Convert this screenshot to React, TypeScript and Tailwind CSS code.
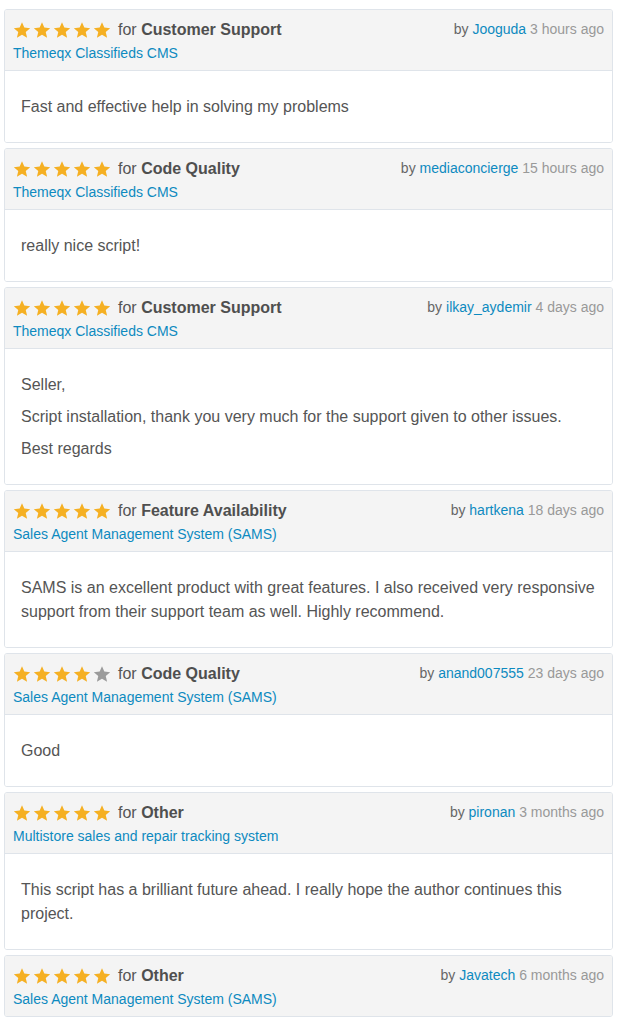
const reviews = [
  {
    stars: 5,
    category: 'Customer Support',
    product: 'Themeqx Classifieds CMS',
    author: 'Jooguda',
    time: '3 hours ago',
    body: ['Fast and effective help in solving my problems'],
  },
  {
    stars: 5,
    category: 'Code Quality',
    product: 'Themeqx Classifieds CMS',
    author: 'mediaconcierge',
    time: '15 hours ago',
    body: ['really nice script!'],
  },
  {
    stars: 5,
    category: 'Customer Support',
    product: 'Themeqx Classifieds CMS',
    author: 'ilkay_aydemir',
    time: '4 days ago',
    body: [
      'Seller,',
      'Script installation, thank you very much for the support given to other issues.',
      'Best regards',
    ],
  },
  {
    stars: 5,
    category: 'Feature Availability',
    product: 'Sales Agent Management System (SAMS)',
    author: 'hartkena',
    time: '18 days ago',
    body: [
      'SAMS is an excellent product with great features. I also received very responsive support from their support team as well. Highly recommend.',
    ],
  },
  {
    stars: 4,
    category: 'Code Quality',
    product: 'Sales Agent Management System (SAMS)',
    author: 'anand007555',
    time: '23 days ago',
    body: ['Good'],
  },
  {
    stars: 5,
    category: 'Other',
    product: 'Multistore sales and repair tracking system',
    author: 'pironan',
    time: '3 months ago',
    body: ['This script has a brilliant future ahead. I really hope the author continues this project.'],
  },
  {
    stars: 5,
    category: 'Other',
    product: 'Sales Agent Management System (SAMS)',
    author: 'Javatech',
    time: '6 months ago',
    body: [],
  },
];

const Star = ({ filled }: { filled: boolean }) => (
  <svg viewBox="0 0 24 24" className="w-[18px] h-[18px]">
    <path
      d="M12 1.6l3.1 7.2 7.8.7-5.9 5.2 1.8 7.7L12 18.3l-6.8 4.1 1.8-7.7L1.1 9.5l7.8-.7z"
      fill={filled ? '#f5b023' : '#9b9b9b'}
    />
  </svg>
);

const App = () => {
  return (
    <div className="min-h-screen bg-white px-[4px] pt-[9px] font-['Liberation_Sans',Arial,sans-serif]">
      <div className="flex flex-col gap-[5px] w-[609px]">
        {reviews.map((r, i) => (
          <div key={i} className="border border-[#dfe4ea] rounded-[3px] overflow-hidden">
            {/* Header */}
            <div className="bg-[#f4f4f4] px-[8px] pt-[9px] pb-[7px] flex justify-between">
              <div>
                <div className="flex items-center h-[22px]">
                  <div className="flex gap-[2px]">
                    {[0, 1, 2, 3, 4].map((s) => (
                      <Star key={s} filled={s < r.stars} />
                    ))}
                  </div>
                  <span className="ml-[7px] text-[16px] text-[#555]">
                    for <span className="font-bold text-[#4f4f4f]">{r.category}</span>
                  </span>
                </div>
                <div className="text-[14px] leading-[20px] mt-[2px] text-[#0d8ac0]">{r.product}</div>
              </div>
              <div className="text-[14px] leading-[20px] text-[#999] pt-[0px]">
                <span className="text-[#666]">by </span>
                <span className="text-[#0d8ac0]">{r.author}</span> {r.time}
              </div>
            </div>
            {r.body.length > 0 && (
              <div className="border-t border-[#dfe4ea] bg-white px-[16px] pt-[24px] pb-[23px] text-[16px] leading-[24px] text-[#555] flex flex-col gap-[8px]">
                {r.body.map((p, j) => (
                  <p key={j}>{p}</p>
                ))}
              </div>
            )}
          </div>
        ))}
      </div>
    </div>
  );
};

export default App;
